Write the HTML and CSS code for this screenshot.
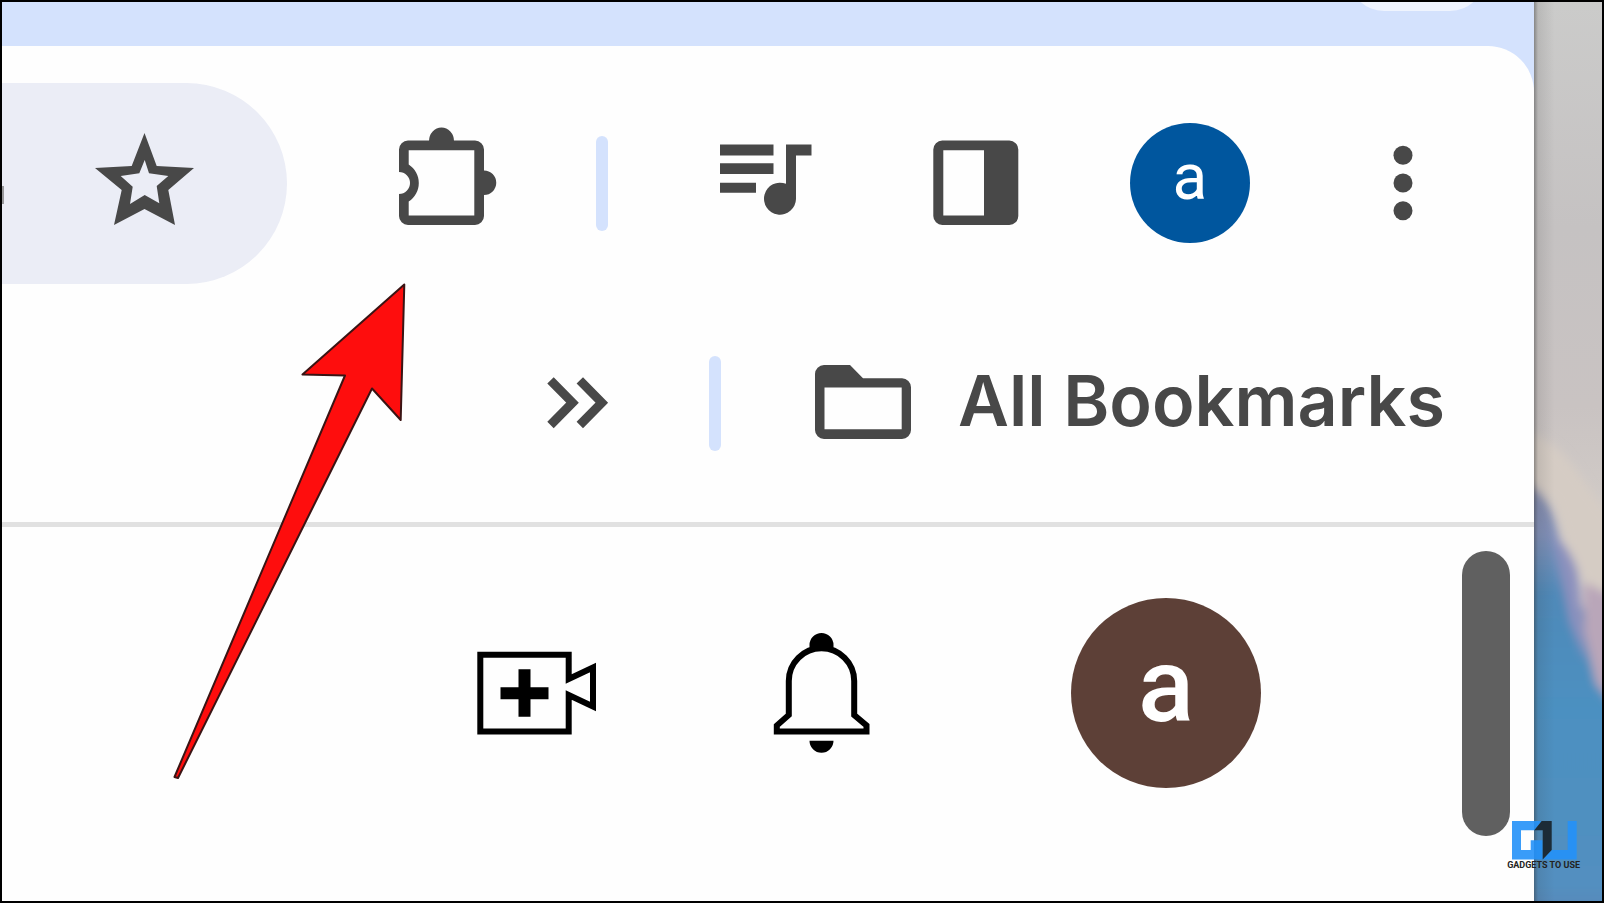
FILE: index.html
```html
<!DOCTYPE html>
<html lang="en">
<head>
<meta charset="utf-8">
<title>Browser toolbar</title>
<link rel="stylesheet" href="styles.css">
</head>
<body>
<div class="frame">
  <main class="window">
    <div class="tabstrip"><button class="tab-search" aria-label="Search tabs"></button></div>
    <div class="chrome">
      <div class="toolbar">
        <div class="omnibox">
          <span class="caret"></span>
          <button class="icon-btn" aria-label="Bookmark this tab">
            <svg viewBox="0 0 120 120"><path fill-rule="evenodd" d="M60.500 10L72.700 43 110 45 84.300 67 91 102 60.500 86 30 102 37.700 67 11 45 47.700 43zM60.700 37L65 50.300 84.300 53 72.700 63 75.300 80.300 60.700 72 46 81 48.700 63.700 36.700 53 55.300 50.300z"/></svg>
          </button>
        </div>
        <button class="icon-btn" aria-label="Extensions">
          <svg viewBox="0 0 120 120"><path fill-rule="evenodd" d="M25 17.500H92a9 9 0 0 1 9 9V93a9 9 0 0 1-9 9H25a9 9 0 0 1-9-9V71a11 11 0 0 0 0-22V26.500a9 9 0 0 1 9-9zM25.700 27.300V41.500a22 22 0 0 1 0 37V92.500H91.300V27.300z"/><path d="M46 18a12.500 13.500 0 0 1 25 0v4H46zM100 47.500h1a12 12 0 0 1 0 24.500h-1z"/></svg>
        </button>
        <span class="divider divider-wide"></span>
        <button class="icon-btn" aria-label="Media controls">
          <svg viewBox="0 0 120 120"><path d="M16 21.500h53.500v11H16zM16 40.300h53.500v10.700H16zM16 59.700h36v10H16zM82 21.500h25.500v11H92V76a16 16 0 1 1-10-15.200z"/></svg>
        </button>
        <button class="icon-btn" aria-label="Side panel">
          <svg viewBox="0 0 120 120"><path fill-rule="evenodd" d="M25.300 17.500h67a9 9 0 0 1 9 9v66.500a9 9 0 0 1-9 9h-67a9 9 0 0 1-9-9V26.500a9 9 0 0 1 9-9zM26.300 27.300v65.200H67V27.300z"/></svg>
        </button>
        <button class="avatar profile" aria-label="Profile">a</button>
        <button class="icon-btn" aria-label="Menu">
          <svg viewBox="0 0 120 120"><circle cx="60" cy="32.300" r="9.500"/><circle cx="60" cy="60" r="9.500"/><circle cx="60" cy="87.700" r="9.500"/></svg>
        </button>
      </div>
      <div class="bookmarks">
        <button class="small-btn" aria-label="More bookmarks">
          <svg viewBox="0 0 100 100"><path class="chevrons" d="M22.500 27.300L44.500 49.700 22.500 72M51.800 27.300L73.800 49.700 51.800 72"/></svg>
        </button>
        <span class="divider"></span>
        <button class="all-bookmarks">
          <svg viewBox="0 0 100 100"><path fill-rule="evenodd" d="M11 12H37L50 25.300H89a9 9 0 0 1 9 9V77a9 9 0 0 1-9 9H11a9 9 0 0 1-9-9V21a9 9 0 0 1 9-9zM11.500 34.500V76.300H88.700V34.500z"/></svg>
          <span class="label">All Bookmarks</span>
        </button>
      </div>
    </div>
    <div class="page">
      <div class="page-header">
        <button class="page-btn" aria-label="Create">
          <svg viewBox="0 0 140 140"><path class="line" d="M101.700 31.700V56L126 44.500V83.500L101.700 72V108.500H13.300V31.700z"/><path d="M51.500 46.300h12v18h18v12h-18v17.500h-12V76.300h-18v-12h18z"/></svg>
        </button>
        <button class="page-btn" aria-label="Notifications">
          <svg viewBox="0 0 140 140"><path d="M57.500 30V22a12 12 0 0 1 24 0v8zM57.500 117.700h24a12 12 0 0 1-24 0z"/><path class="line bell" d="M36.800 92V58a32.700 32.700 0 0 1 65.400 0V92L114.500 102.500V108.500H24.800V102.500z"/></svg>
        </button>
        <button class="avatar account" aria-label="Account">a</button>
      </div>
      <div class="scrollbar"></div>
    </div>
  </main>
  <div class="wallpaper">
    <svg viewBox="0 0 68 899" preserveAspectRatio="none">
      <defs>
        <linearGradient id="sky" x1="0" y1="0" x2="0" y2="1"><stop offset="0" stop-color="#cbcbca"/><stop offset=".25" stop-color="#c5c2c2"/><stop offset=".45" stop-color="#c9c3c2"/><stop offset=".6" stop-color="#d3cdc8"/></linearGradient>
        <linearGradient id="sea" x1="0" y1="0" x2="0" y2="1"><stop offset="0" stop-color="#8288a8"/><stop offset=".12" stop-color="#8290b8"/><stop offset=".25" stop-color="#4f89b8"/><stop offset=".5" stop-color="#4c90c1"/><stop offset=".88" stop-color="#528fc0"/><stop offset="1" stop-color="#667fae"/></linearGradient>
        <linearGradient id="edge"><stop offset="0" stop-color="#333" stop-opacity=".45"/><stop offset=".06" stop-color="#333" stop-opacity=".12"/><stop offset=".3" stop-color="#333" stop-opacity="0"/></linearGradient>
        <filter id="soft" x="-50%" y="-20%" width="200%" height="140%"><feGaussianBlur stdDeviation="5"/></filter>
      </defs>
      <rect width="68" height="899" fill="url(#sky)"/>
      <g filter="url(#soft)">
        <path d="M-10 430Q20 436 42 468T90 530V620L40 570 20 500-10 478z" fill="#d5ccc4"/>
        <path d="M-20 475Q14 485 24 530T50 610T90 705V940H-20z" fill="url(#sea)"/>
        <path d="M18 530Q36 545 44 570L52 660 36 620z" fill="#8c91bd"/>
        <path d="M50 580L90 600V715L62 682 50 630z" fill="#b9a6b9"/>
      </g>
      <rect width="68" height="899" fill="url(#edge)"/>
    </svg>
  </div>
  <svg class="pointer" viewBox="0 0 240 500"><path d="M234.300 4.500L132.500 94.500 175 95.500 4.500 497 8 498 202 108.500 230.700 140z"/></svg>
  <div class="watermark">
    <svg viewBox="0 0 66 39"><path fill="#2491f8" fill-opacity=".9" d="M1 0H30.700L23.300 9.300H10V29H19.700V19.300H31.700V38.500H1zM56.700 0H65.700V38.500H31.700L40.700 29H56.700z"/><path fill="#1c2b36" d="M30.700 0H40.700V29L31.700 38.500V9.300H23.300z"/></svg>
    <span>GADGETS TO USE</span>
  </div>
</div>
</body>
</html>
```
FILE: styles.css
```css
* { box-sizing: border-box; }

body {
  margin: 0;
  font-family: Roboto, "Liberation Sans", sans-serif;
  background: #000;
}

button {
  flex: none;
  padding: 0;
  border: 0;
  background: none;
  color: inherit;
  font: inherit;
}

svg { display: block; width: 100%; fill: #484848; }

.frame {
  position: relative;
  display: flex;
  min-height: 100vh;
  border: 2px solid #000;
}

.window {
  flex: 1;
  display: flex;
  flex-direction: column;
  min-width: 0;
  background: #d4e2fd;
}

.tabstrip {
  display: flex;
  justify-content: flex-end;
  align-items: flex-start;
  height: 44px;
  padding-right: 49px;
  overflow: hidden;
}

.tab-search {
  width: 136px;
  height: 70px;
  margin-top: -61px;
  border-radius: 35px;
  background: #eff4fe;
}

.chrome {
  border-radius: 0 46px 0 0;
  border-bottom: 5px solid #e1e1e1;
  background: #fefefe;
}

.toolbar {
  display: flex;
  align-items: center;
  gap: 93px;
  height: 274px;
  padding-right: 71px;
}

.omnibox {
  flex: 1;
  display: flex;
  align-items: center;
  justify-content: space-between;
  height: 201px;
  margin-right: 3px;
  padding-right: 83px;
  border-radius: 0 101px 101px 0;
  background: #ebedf6;
}

.caret { width: 2px; height: 18px; margin-top: 24px; background: #99999c; }

.icon-btn { width: 120px; height: 120px; }

.divider {
  flex: none;
  width: 12px;
  height: 95px;
  border-radius: 6px;
  background: #d4e2fd;
}

.divider-wide { margin-right: 3px; }

.avatar {
  border-radius: 50%;
  color: #fff;
  line-height: 1;
  text-align: center;
}

.profile {
  width: 120px;
  height: 120px;
  padding-bottom: 10px;
  background: #00569e;
  font-size: 64px;
}

.bookmarks {
  display: flex;
  align-items: center;
  justify-content: flex-end;
  height: 202px;
  padding: 0 86px 36px 0;
}

.small-btn { width: 100px; height: 100px; margin-right: 81px; }

.chevrons { fill: none; stroke: #484848; stroke-width: 9; }

.all-bookmarks {
  display: flex;
  align-items: center;
  gap: 45px;
  margin-left: 92px;
  color: #484848;
  font-family: Inter, Roboto, sans-serif;
  font-size: 70px;
  font-weight: 600;
  line-height: 84px;
  white-space: nowrap;
}

.all-bookmarks svg { width: 100px; }

.label { min-width: 490px; padding-bottom: 4px; text-align: left; }

.page {
  flex: 1;
  display: flex;
  justify-content: flex-end;
  align-items: flex-start;
  gap: 201px;
  padding: 24px 24px 60px 0;
  background: #fefefe;
}

.page-header {
  display: flex;
  align-items: center;
  padding-top: 47px;
}

.page-btn { width: 140px; height: 140px; margin-right: 145px; }
.page-btn + .page-btn { margin-right: 179px; }
.page-btn svg { fill: #000; }

.page-btn .line { fill: none; stroke: #000; stroke-width: 6; }
.page-btn .bell { fill: #fefefe; }

.account {
  width: 190px;
  height: 190px;
  padding-bottom: 14px;
  background: #5d4037;
  font-size: 104px;
  font-weight: 500;
}

.scrollbar {
  width: 48px;
  height: 285px;
  border-radius: 24px;
  background: #606060;
}

.wallpaper { position: relative; flex: none; width: 68px; overflow: hidden; background: #c9c3c2; }
.wallpaper svg { position: absolute; inset: 0; height: 100%; }

.pointer {
  position: absolute;
  top: 278px;
  right: 1192px;
  width: 240px;
  fill: #fe0d0d;
  stroke: #3a1414;
  stroke-width: 2;
  stroke-linejoin: round;
  pointer-events: none;
}

.watermark {
  position: absolute;
  right: 22px;
  bottom: 31px;
  display: flex;
  flex-direction: column;
  align-items: center;
  color: #222;
  font-size: 9px;
  font-weight: 700;
  line-height: 10px;
  white-space: nowrap;
}

.watermark svg { width: 66px; }
```
